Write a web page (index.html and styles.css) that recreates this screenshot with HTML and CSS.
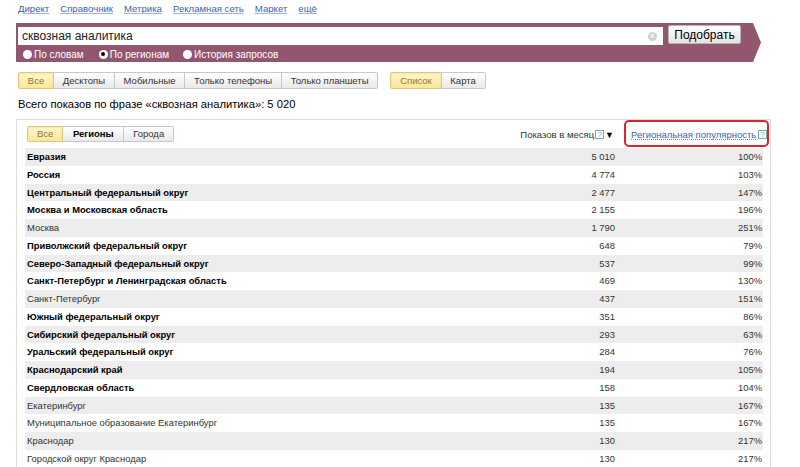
FILE: index.html
```html
<!DOCTYPE html>
<html lang="ru">
<head>
<meta charset="utf-8">
<title>Подбор слов</title>
<link rel="stylesheet" href="styles.css">
</head>
<body>
<div class="toplinks">
  <a href="#">Директ</a><a href="#">Справочник</a><a href="#">Метрика</a><a href="#">Рекламная сеть</a><a href="#">Маркет</a><a href="#">ещё</a>
</div>
<div class="band">
  <div class="searchrow">
    <div class="input"><span>сквозная аналитика</span><span class="clear">×</span></div>
    <button class="btn">Подобрать</button>
  </div>
  <div class="radios">
    <label class="radio"><span class="dot"></span>По словам</label>
    <label class="radio"><span class="dot on"></span>По регионам</label>
    <label class="radio"><span class="dot"></span>История запросов</label>
  </div>
</div>
<div class="tabsline">
  <div class="tabs">
    <span class="tab sel">Все</span><span class="tab">Десктопы</span><span class="tab">Мобильные</span><span class="tab">Только телефоны</span><span class="tab">Только планшеты</span>
  </div>
  <div class="tabs">
    <span class="tab sel">Список</span><span class="tab">Карта</span>
  </div>
</div>
<div class="total">Всего показов по фразе «сквозная аналитика»: 5 020</div>
<div class="box">
  <div class="head">
    <div class="tabs small">
      <span class="tab sel">Все</span><span class="tab bold">Регионы</span><span class="tab">Города</span>
    </div>
    <div class="hnum">Показов в месяц<span class="q">?</span><span class="arr">▼</span></div>
    <div class="hpop"><a href="#">Региональная популярность</a><span class="q">?</span></div>
  </div>
  <div class="rows">
    <div class="row b"><span class="name">Евразия</span><span class="num">5 010</span><span class="pct">100%</span></div>
    <div class="row b"><span class="name">Россия</span><span class="num">4 774</span><span class="pct">103%</span></div>
    <div class="row b"><span class="name">Центральный федеральный округ</span><span class="num">2 477</span><span class="pct">147%</span></div>
    <div class="row b"><span class="name">Москва и Московская область</span><span class="num">2 155</span><span class="pct">196%</span></div>
    <div class="row"><span class="name">Москва</span><span class="num">1 790</span><span class="pct">251%</span></div>
    <div class="row b"><span class="name">Приволжский федеральный округ</span><span class="num">648</span><span class="pct">79%</span></div>
    <div class="row b"><span class="name">Северо-Западный федеральный округ</span><span class="num">537</span><span class="pct">99%</span></div>
    <div class="row b"><span class="name">Санкт-Петербург и Ленинградская область</span><span class="num">469</span><span class="pct">130%</span></div>
    <div class="row"><span class="name">Санкт-Петербург</span><span class="num">437</span><span class="pct">151%</span></div>
    <div class="row b"><span class="name">Южный федеральный округ</span><span class="num">351</span><span class="pct">86%</span></div>
    <div class="row b"><span class="name">Сибирский федеральный округ</span><span class="num">293</span><span class="pct">63%</span></div>
    <div class="row b"><span class="name">Уральский федеральный округ</span><span class="num">284</span><span class="pct">76%</span></div>
    <div class="row b"><span class="name">Краснодарский край</span><span class="num">194</span><span class="pct">105%</span></div>
    <div class="row b"><span class="name">Свердловская область</span><span class="num">158</span><span class="pct">104%</span></div>
    <div class="row"><span class="name">Екатеринбург</span><span class="num">135</span><span class="pct">167%</span></div>
    <div class="row"><span class="name">Муниципальное образование Екатеринбург</span><span class="num">135</span><span class="pct">167%</span></div>
    <div class="row"><span class="name">Краснодар</span><span class="num">130</span><span class="pct">217%</span></div>
    <div class="row"><span class="name">Городской округ Краснодар</span><span class="num">130</span><span class="pct">217%</span></div>
  </div>
</div>
</body>
</html>
```
FILE: styles.css
```css
html, body { margin: 0; padding: 0; background: #fff; }
body { font-family: "Liberation Sans", Arial, sans-serif; color: #000; font-size: 9.5px; overflow: hidden; height: 467px; }

.toplinks { display: flex; gap: 11px; padding: 2px 0 0 18px; height: 23px; box-sizing: border-box; line-height: 13px; font-size: 9.6px; }
.toplinks a { color: #3a63b0; text-decoration: underline; text-decoration-color: #9fb4dc; }

.band { margin-left: 16px; width: 745px; height: 39px; background: #93566f; box-sizing: border-box; padding: 4px 0 0 2px;
  clip-path: polygon(0 0, calc(100% - 8px) 0, 100% 50%, calc(100% - 8px) 100%, 0 100%); }
.searchrow { display: flex; gap: 5px; align-items: flex-start; }
.input { width: 645px; height: 18px; background: #fff; box-sizing: border-box; padding: 0 6px 0 4px; display: flex; justify-content: space-between; align-items: center; font-size: 12px; line-height: 18px; color: #222; }
.clear { width: 9px; height: 9px; border-radius: 50%; background: #d0d0d0; color: #fff; font-size: 9px; line-height: 9px; text-align: center; }
.btn { width: 73px; height: 19px; margin-top: -2px; border: 1px solid #b5b5b5; border-radius: 2px; background: linear-gradient(#fff, #e2e2e2); font-family: inherit; font-size: 12px; padding: 0; color: #000; }
.radios { display: flex; padding-left: 5px; margin-top: 2px; height: 14px; align-items: center; }
.radio { display: flex; align-items: center; color: #fff; font-size: 10px; gap: 2px; margin-right: 15px; }
.radio:nth-child(2) { margin-right: 14px; }
.dot { width: 9px; height: 9px; border-radius: 50%; background: #fff; box-sizing: border-box; display: flex; align-items: center; justify-content: center; }
.dot.on::after { content: ""; width: 4px; height: 4px; border-radius: 50%; background: #000; }

.tabsline { display: flex; gap: 12px; padding: 10px 0 0 18px; }
.tabs { display: flex; }
.tab { height: 17px; box-sizing: border-box; border: 1px solid #c8c8c8; border-left: none; background: linear-gradient(#fff, #e9e9e9); padding: 0 8.8px; line-height: 15px; font-size: 9.5px; color: #333; }
.tab:first-child { border-left: 1px solid #c8c8c8; border-radius: 2px 0 0 2px; }
.tab:last-child { border-radius: 0 2px 2px 0; }
.tab.sel { background: linear-gradient(#fff7cc, #fbe69a); border-color: #e0c878; color: #8a7a3a; box-shadow: inset 0 1px 2px rgba(0,0,0,.08); }
.tab.bold { font-weight: bold; color: #000; }

.total { padding: 8px 0 0 18px; font-size: 11.2px; line-height: 14px; height: 30px; box-sizing: border-box; }

.box { margin-left: 16px; width: 755px; border: 1px solid #dcdcdc; border-bottom: none; box-sizing: border-box; height: 400px; padding: 0 4px 0 8px; }
.head { display: flex; align-items: center; height: 27px; }
.tabs.small { margin-left: 2px; margin-top: 1px; }
.tabs.small .tab { padding: 0 9px; height: 16px; line-height: 14px; }
.tabs.small .tab.bold { padding: 0 9.5px; }
.hnum { margin-left: auto; display: flex; align-items: center; color: #333; margin-top: 2px; }
.q { display: inline-block; width: 7px; height: 7px; border: 1px solid #7aa; font-size: 7px; line-height: 7px; text-align: center; color: #4a7; margin-left: 1px; }
.arr { font-size: 9px; margin-left: 1px; color: #000; }
.hpop { width: 145px; height: 27px; box-sizing: border-box; border: 2px solid #d9262c; border-radius: 5px; margin-left: 10px; margin-right: -3px; display: flex; align-items: center; padding-left: 5px; white-space: nowrap; padding-top: 2px; }
.hpop a { color: #3a63b0; text-decoration: underline dotted #6a8cc8; }
.hpop .q { margin-left: 2px; }

.rows { margin-top: 1px; width: 738px; }
.row { display: flex; height: 17.75px; line-height: 17.75px; font-size: 9.4px; color: #333; }
.row:nth-child(odd) { background: #ededed; }
.row.b .name { font-weight: bold; color: #000; }
.name { flex: 1; padding-left: 2px; }
.num { width: 100px; text-align: right; }
.pct { width: 148px; text-align: right; padding-right: 1px; box-sizing: border-box; }
```
